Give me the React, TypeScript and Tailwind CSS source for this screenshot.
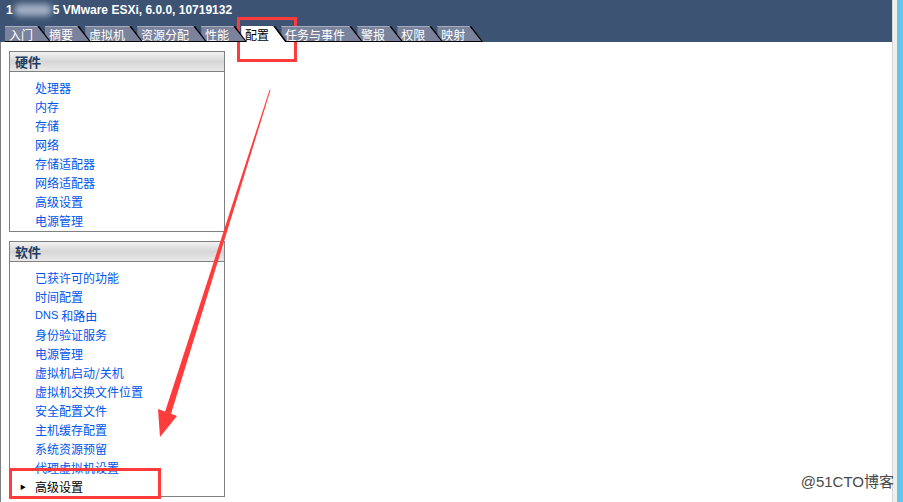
import React from "react";

const tabs = [
  { label: "入门", z: "z-[10]" },
  { label: "摘要", z: "z-[9]" },
  { label: "虚拟机", z: "z-[8]" },
  { label: "资源分配", z: "z-[7]" },
  { label: "性能", z: "z-[6]" },
  { label: "配置", z: "z-[5]", active: true },
  { label: "任务与事件", z: "z-[4]" },
  { label: "警报", z: "z-[3]" },
  { label: "权限", z: "z-[2]" },
  { label: "映射", z: "z-[1]" },
];

const hardware = ["处理器", "内存", "存储", "网络", "存储适配器", "网络适配器", "高级设置", "电源管理"];

const software = [
  "已获许可的功能",
  "时间配置",
  "DNS",
  "身份验证服务",
  "电源管理",
  "虚拟机启动/关机",
  "虚拟机交换文件位置",
  "安全配置文件",
  "主机缓存配置",
  "系统资源预留",
  "代理虚拟机设置",
];

function Tab({ label, z, active }: { label: string; z: string; active?: boolean }) {
  return (
    <div
      className={`relative ${z} -mr-[6px] flex h-[16px] bg-black pr-[2px] [clip-path:polygon(0_0,calc(100%-12px)_0,100%_100%,0_100%)] ${
        active ? "" : "pb-[1px]"
      }`}
    >
      <span
        className={`flex items-center pl-[4px] pr-[16px] text-[12px] leading-[15px] [clip-path:polygon(0_0,calc(100%-12px)_0,100%_100%,0_100%)] ${
          active ? "bg-white text-black" : "border-t border-[#a3abbe] bg-[#7a839b] text-white"
        }`}
      >
        {label}
      </span>
    </div>
  );
}

function Box({ title, children }: { title: string; children: React.ReactNode }) {
  return (
    <div className="w-[216px] border border-[#808080] bg-white">
      <div className="flex h-[20px] items-center border-b border-[#808080] bg-gradient-to-b from-[#f2f2f2] via-[#d6d6d6] to-[#e9e9e9] pl-[5px] text-[13px] font-bold text-[#1d3d62]">
        {title}
      </div>
      {children}
    </div>
  );
}

export default function App() {
  return (
    <div className="relative flex h-[502px] w-[903px] overflow-hidden bg-white font-['Noto_Sans_CJK_SC',sans-serif]">
      <div className="flex w-[892px] flex-col">
        <header className="flex h-[42px] flex-col bg-[#3c5373]">
          <div className="flex h-[26px] items-center pb-[6px] pl-[6px] font-['Liberation_Sans',sans-serif] text-[12px] font-bold text-white">
            <span>1</span>
            <span className="mx-[1px] inline-block h-[12px] w-[38px] rounded-full bg-[#a3b0c4] blur-[3px]" />
            <span>5 VMware ESXi, 6.0.0, 10719132</span>
          </div>
          <div className="flex h-[16px] pl-[5px]">
            {tabs.map((t) => (
              <Tab key={t.label} {...t} />
            ))}
          </div>
        </header>

        <div className="flex flex-1 flex-col gap-[9px] border-l border-[#808080] pl-[8px] pt-[9px]">
          <Box title="硬件">
            <ul className="pb-[1px] pt-[6px] text-[12px] leading-[19px] text-[#0055ee]">
              {hardware.map((h) => (
                <li key={h} className="h-[19px] pl-[25px]">
                  {h}
                </li>
              ))}
            </ul>
          </Box>
          <Box title="软件">
            <ul className="pt-[6px] text-[12px] leading-[19px] text-[#0055ee]">
              {software.map((s) =>
                s === "DNS" ? (
                  <li key={s} className="flex h-[19px] items-center pl-[25px]">
                    <span className="font-['Liberation_Sans',sans-serif] text-[11px]">DNS</span>
                    <span className="ml-[3px]">和路由</span>
                  </li>
                ) : (
                  <li key={s} className="h-[19px] pl-[25px]">
                    {s}
                  </li>
                )
              )}
              <li className="flex h-[19px] items-center text-black">
                <span className="w-[25px] pl-[10px] text-[6px]">▶</span>
                高级设置
              </li>
            </ul>
          </Box>
        </div>
      </div>

      <div className="w-[5px] border-l border-[#d6d6d6] bg-[#efefef]" />
      <div className="w-[6px] bg-[#62c7e9]" />

      {/* red annotations */}
      <div className="absolute left-[237px] top-[17px] h-[45px] w-[60px] border-[3px] border-[#ff3b3b]" />
      <div className="absolute left-[9px] top-[468px] h-[31px] w-[152px] border-[3px] border-[#ff3b3b]" />
      <svg className="absolute left-0 top-0" width="903" height="502" viewBox="0 0 903 502">
        <polygon points="270.5,90 269.5,90 165,412 171,414" fill="#ff3b3b" />
        <polygon points="158,409 177,416 160,437" fill="#ff3b3b" />
      </svg>

      <div className="absolute bottom-[9px] right-[9px] font-['Liberation_Sans','Noto_Sans_CJK_SC',sans-serif] text-[15px] text-[#4a4a4a]">
        @51CTO博客
      </div>
    </div>
  );
}
